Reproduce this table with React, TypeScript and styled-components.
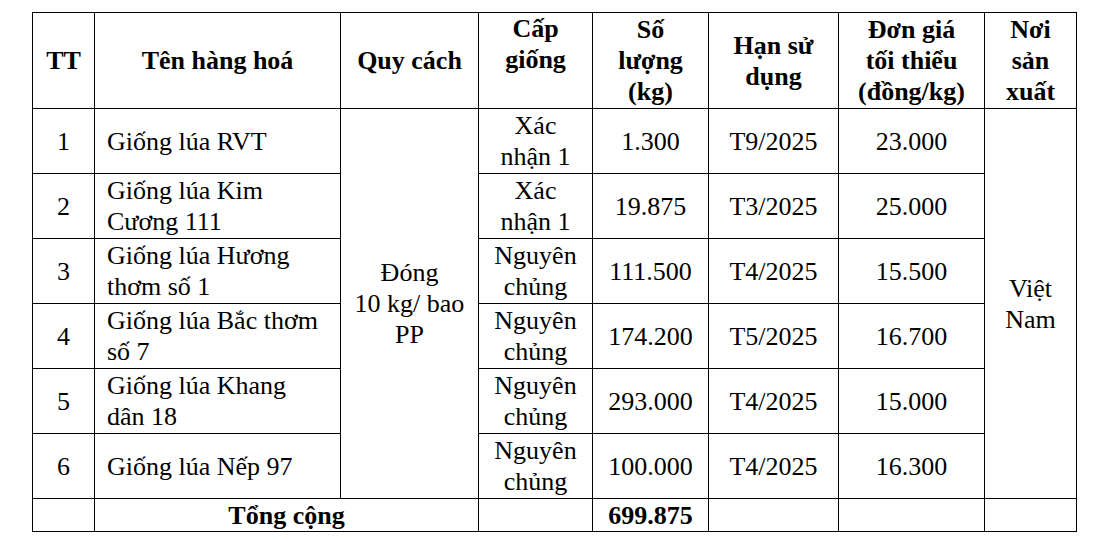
import styled, { createGlobalStyle } from "styled-components";

const GlobalStyle = createGlobalStyle`
  html, body {
    margin: 0;
    padding: 0;
    background: #fff;
  }
  body {
    font-family: "Liberation Serif", "Times New Roman", serif;
    color: #000;
  }
`;

const columns = [62, 246, 138, 114, 116, 130, 146, 92];

type Item = {
  no: number;
  name: string[];
  grade: string[];
  qty: string;
  expiry: string;
  price: string;
};

const items: Item[] = [
  { no: 1, name: ["Giống lúa RVT"], grade: ["Xác", "nhận 1"], qty: "1.300", expiry: "T9/2025", price: "23.000" },
  { no: 2, name: ["Giống lúa Kim", "Cương 111"], grade: ["Xác", "nhận 1"], qty: "19.875", expiry: "T3/2025", price: "25.000" },
  { no: 3, name: ["Giống lúa Hương", "thơm số 1"], grade: ["Nguyên", "chủng"], qty: "111.500", expiry: "T4/2025", price: "15.500" },
  { no: 4, name: ["Giống lúa Bắc thơm", "số 7"], grade: ["Nguyên", "chủng"], qty: "174.200", expiry: "T5/2025", price: "16.700" },
  { no: 5, name: ["Giống lúa Khang", "dân 18"], grade: ["Nguyên", "chủng"], qty: "293.000", expiry: "T4/2025", price: "15.000" },
  { no: 6, name: ["Giống lúa Nếp 97"], grade: ["Nguyên", "chủng"], qty: "100.000", expiry: "T4/2025", price: "16.300" },
];

const Lines = ({ lines }: { lines: string[] }) => (
  <>
    {lines.map((l, i) => (
      <span key={i}>
        {i > 0 && <br />}
        {l}
      </span>
    ))}
  </>
);

export default function App() {
  return (
    <>
      <GlobalStyle />
      <Sheet>
        <colgroup>
          {columns.map((w, i) => (
            <col key={i} style={{ width: w }} />
          ))}
        </colgroup>
        <thead>
          <tr>
            <HeadCell>TT</HeadCell>
            <HeadCell>Tên hàng hoá</HeadCell>
            <HeadCell>Quy cách</HeadCell>
            <HeadCell $valign="top">
              <Lines lines={["Cấp", "giống"]} />
            </HeadCell>
            <HeadCell>
              <Lines lines={["Số", "lượng", "(kg)"]} />
            </HeadCell>
            <HeadCell>
              <Lines lines={["Hạn sử", "dụng"]} />
            </HeadCell>
            <HeadCell>
              <Lines lines={["Đơn giá", "tối thiểu", "(đồng/kg)"]} />
            </HeadCell>
            <HeadCell>
              <Lines lines={["Nơi", "sản", "xuất"]} />
            </HeadCell>
          </tr>
        </thead>
        <tbody>
          {items.map((item, idx) => (
            <tr key={item.no}>
              <Cell>{item.no}</Cell>
              <Cell $align="left">
                <Lines lines={item.name} />
              </Cell>
              {idx === 0 && (
                <Cell rowSpan={items.length}>
                  <Lines lines={["Đóng", "10 kg/ bao", "PP"]} />
                </Cell>
              )}
              <Cell>
                <Lines lines={item.grade} />
              </Cell>
              <Cell>{item.qty}</Cell>
              <Cell>{item.expiry}</Cell>
              <Cell>{item.price}</Cell>
              {idx === 0 && (
                <Cell rowSpan={items.length}>
                  <Lines lines={["Việt", "Nam"]} />
                </Cell>
              )}
            </tr>
          ))}
          <TotalRow>
            <Cell />
            <Cell colSpan={2} $bold>
              Tổng cộng
            </Cell>
            <Cell />
            <Cell $bold>699.875</Cell>
            <Cell />
            <Cell />
            <Cell />
          </TotalRow>
        </tbody>
      </Sheet>
    </>
  );
}

const Sheet = styled.table`
  margin: 12px 0 0 32px;
  width: 1045px;
  border-collapse: collapse;
  table-layout: fixed;
  font-family: "Liberation Serif", "Times New Roman", serif;
  font-size: 26px;
  line-height: 31px;
  color: #000;
`;

const HeadCell = styled.th<{ $valign?: "top" | "middle" }>`
  height: 95px;
  padding: 0 4px;
  border: 1px solid #000;
  font-family: "Liberation Serif", "Times New Roman", serif;
  font-weight: 700;
  text-align: center;
  vertical-align: ${(p) => p.$valign ?? "middle"};
  white-space: nowrap;
`;

const Cell = styled.td<{ $align?: "left" | "center"; $bold?: boolean }>`
  height: 64px;
  padding: ${(p) => (p.$align === "left" ? "0 4px 0 12px" : "0 4px")};
  border: 1px solid #000;
  font-family: "Liberation Serif", "Times New Roman", serif;
  text-align: ${(p) => p.$align ?? "center"};
  vertical-align: middle;
  font-weight: ${(p) => (p.$bold ? 700 : 400)};
  white-space: nowrap;
`;

const TotalRow = styled.tr`
  td {
    height: 32px;
  }
`;
